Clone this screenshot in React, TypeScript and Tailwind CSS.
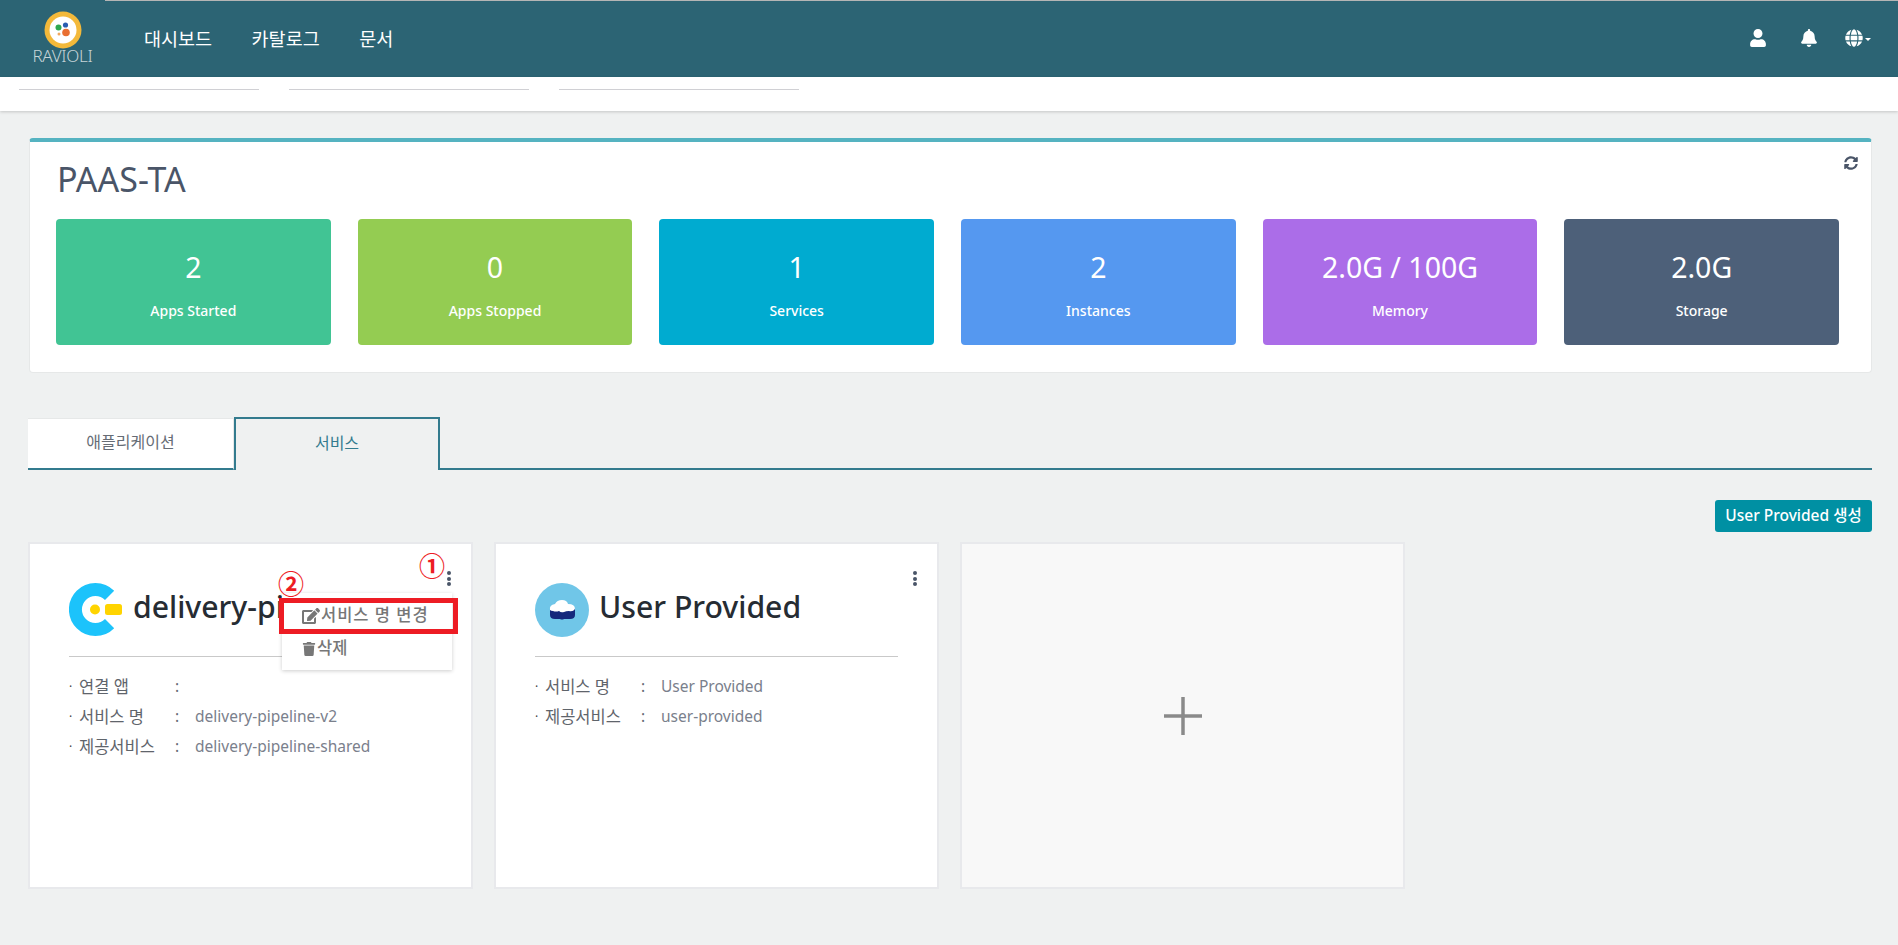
import { FaBell, FaEdit, FaGlobe, FaSyncAlt, FaTrash, FaUser } from "react-icons/fa";

const font = '"Noto Sans", "Noto Sans CJK KR", sans-serif';

const stats = [
  { value: "2", label: "Apps Started", color: "bg-[#41c494]" },
  { value: "0", label: "Apps Stopped", color: "bg-[#94cc52]" },
  { value: "1", label: "Services", color: "bg-[#00abd0]" },
  { value: "2", label: "Instances", color: "bg-[#5598f0]" },
  { value: "2.0G / 100G", label: "Memory", color: "bg-[#ab6de8]" },
  { value: "2.0G", label: "Storage", color: "bg-[#4d6079]" },
];

const Logo = () => (
  <div className="flex h-[77px] w-[105px] shrink-0 flex-col items-center pt-[11px] pl-[20px]">
    <svg width="38" height="38" viewBox="0 0 38 38">
      <circle cx="19" cy="19" r="18.5" fill="#f3b93a" />
      <circle cx="19" cy="19" r="13.5" fill="#ffffff" />
      <circle cx="14.5" cy="16.5" r="3" fill="#2fa84f" />
      <circle cx="21.5" cy="14" r="2.6" fill="#2a5db0" />
      <circle cx="22" cy="21.5" r="3.8" fill="#e96f32" />
      <circle cx="15" cy="23" r="1.5" fill="#f0a860" />
    </svg>
    <span className="mt-[-2px] text-[17px] leading-[18px] font-light tracking-[-0.3px] text-[#c6d4d8]">RAVIOLI</span>
  </div>
);

const DeliveryIcon = () => (
  <svg width="54" height="54" viewBox="0 0 54 54" className="shrink-0">
    <path d="M40.6 12.4A20 20 0 1 0 40.6 40.6" fill="none" stroke="#1cc3fb" strokeWidth="13" />
    <circle cx="26" cy="26.5" r="5" fill="#ffd400" />
    <rect x="36" y="21" width="17" height="11" rx="2.5" fill="#ffd400" />
  </svg>
);

const CloudIcon = () => (
  <svg width="54" height="54" viewBox="0 0 54 54" className="shrink-0">
    <circle cx="27" cy="27" r="27" fill="#70c6e8" />
    <path d="M15 25v7q0 4 5 4h5q2 1 4 0h6q5 0 5-4v-7z" fill="#15297c" />
    <path d="M15 27q-1-5 5-6 2-4 7-4 5 0 6 4 7 0 7 5-2 3-6 2-3 0-5 1-3 1-5-1-3 1-6 0-2 0-3-1z" fill="#ffffff" />
  </svg>
);

const Dots = () => (
  <div className="absolute top-[27px] right-[20px] flex flex-col gap-[1.5px]">
    <span className="h-[4px] w-[4px] rounded-full bg-[#4a5568]" />
    <span className="h-[4px] w-[4px] rounded-full bg-[#4a5568]" />
    <span className="h-[4px] w-[4px] rounded-full bg-[#4a5568]" />
  </div>
);

const InfoRow = ({ label, value }: { label: string; value?: string }) => (
  <div className="flex h-[30px] items-center text-[15.5px] text-[#666c75]">
    <span className="w-[10px] text-[12px] text-[#444]">·</span>
    <span className="w-[96px] text-[16.5px] text-[#5f646b]">{label}</span>
    <span className="w-[20px]">:</span>
    <span className="text-[#7a808c]">{value}</span>
  </div>
);

const ServiceCard = ({
  icon,
  title,
  rows,
}: {
  icon: React.ReactNode;
  title: string;
  rows: { label: string; value?: string }[];
}) => (
  <div className="relative h-[347px] border-2 border-[#e8e9ec] bg-white px-[39px] pt-[39px]">
    <Dots />
    <div className="flex h-[74px] items-start gap-[10px] border-b border-[#c9c9c9] whitespace-nowrap">
      {icon}
      <span className="text-[30.2px] leading-[48px] font-medium text-[#262c33]">{title}</span>
    </div>
    <div className="mt-[15px]">
      {rows.map((r) => (
        <InfoRow key={r.label} label={r.label} value={r.value} />
      ))}
    </div>
  </div>
);

export default function App() {
  return (
    <div className="min-h-screen bg-[#eff1f1]" style={{ fontFamily: font }}>
      <header className="flex h-[77px] bg-[#2c6474] text-white">
        <Logo />
        <div className="flex flex-1 items-center border-t border-[#b5b5b5] pr-[27px] pl-[39px]">
          <nav className="flex gap-[39.5px] text-[18.5px]">
            <span>대시보드</span>
            <span>카탈로그</span>
            <span>문서</span>
          </nav>
          <div className="ml-auto mt-[-2px] flex items-center">
            <FaUser size={18} />
            <FaBell size={18} className="ml-[33px]" />
            <FaGlobe size={18} className="ml-[27px]" />
            <span className="mt-[2px] ml-[2px] h-0 w-0 border-x-[3px] border-t-[3px] border-x-transparent border-t-white" />
          </div>
        </div>
      </header>

      <div className="h-[34px] bg-white pt-[12px] shadow-[0_1px_3px_rgba(0,0,0,0.18)]">
        <div className="flex gap-[30px] pl-[19px]">
          <div className="h-[1px] w-[240px] bg-[#d0d0d4]" />
          <div className="h-[1px] w-[240px] bg-[#d0d0d4]" />
          <div className="h-[1px] w-[240px] bg-[#d0d0d4]" />
        </div>
      </div>

      <main className="pr-[26px] pl-[28px]">
        <section className="relative mt-[27px] ml-[1px] h-[235px] rounded-[4px] border border-[#e6e8e8] border-t-[4px] border-t-[#55b3c1] bg-white pr-[32px] pl-[26px]">
          <FaSyncAlt size={14} className="absolute top-[14px] right-[13px] text-[#4a5568]" />
          <h1 className="ml-[1px] pt-[14px] text-[34px] leading-[46px] text-[#4a5568]">PAAS-TA</h1>
          <div className="mt-[17px] grid grid-cols-6 gap-x-[27px]">
            {stats.map((s) => (
              <div
                key={s.label}
                className={`flex h-[126px] flex-col items-center rounded-[4px] pt-[30px] text-white ${s.color}`}
              >
                <span className="text-[28.5px] leading-[36px]">{s.value}</span>
                <span className="mt-[16px] text-[14px] leading-[20px] font-medium">{s.label}</span>
              </div>
            ))}
          </div>
        </section>

        <div className="mt-[44px] flex h-[53px] items-end">
          <div className="flex h-[52px] w-[206px] items-center justify-center border-t border-r border-b-2 border-[#e6e8e8] border-b-[#337b8e] bg-white pb-[3px] text-[16px] text-[#666c75]">
            애플리케이션
          </div>
          <div className="flex h-[53px] w-[206px] items-center justify-center border-2 border-b-0 border-[#337b8e] pb-[3px] text-[16px] text-[#337b8e]">
            서비스
          </div>
          <div className="flex-1 border-b-2 border-[#337b8e]" />
        </div>

        <div className="mt-[30px] flex justify-end">
          <button className="h-[32px] w-[157px] rounded-[3px] bg-[#0090a3] text-[15.5px] font-medium text-white">
            User Provided 생성
          </button>
        </div>

        <div className="relative mt-[10px] grid w-[1377px] grid-cols-3 gap-x-[21px]">
          <ServiceCard
            icon={<DeliveryIcon />}
            title="delivery-pipeline-v2"
            rows={[
              { label: "연결 앱" },
              { label: "서비스 명", value: "delivery-pipeline-v2" },
              { label: "제공서비스", value: "delivery-pipeline-shared" },
            ]}
          />
          <ServiceCard
            icon={<CloudIcon />}
            title="User Provided"
            rows={[
              { label: "서비스 명", value: "User Provided" },
              { label: "제공서비스", value: "user-provided" },
            ]}
          />
          <div className="flex h-[347px] items-center justify-center border-2 border-[#e8e9ec] bg-[#f8f8f8]">
            <svg width="42" height="42" viewBox="0 0 42 42">
              <path d="M21 2v38M2 21h38" stroke="#8a8a8a" strokeWidth="3.5" />
            </svg>
          </div>

          <div className="absolute top-[51px] left-[254px] z-10 w-[170px] bg-white pt-[6px] pb-[5px] text-[16.5px] font-medium text-[#777] shadow-[0_1px_4px_rgba(0,0,0,0.2)]">
            <div className="flex h-[33px] items-center gap-[1px] pl-[20px] tracking-[1px]">
              <FaEdit size={18} />
              <span>서비스 명 변경</span>
            </div>
            <div className="flex h-[33px] items-center gap-[1px] pl-[20px]">
              <FaTrash size={14} />
              <span>삭제</span>
            </div>
          </div>
          <div className="absolute top-[56px] left-[251px] z-20 h-[36px] w-[179px] border-[5px] border-[#ed1c24]" />
          <span className="absolute top-[6px] left-[391px] z-20 text-[26px] leading-[36px] font-bold text-[#ed1c24]">①</span>
          <span className="absolute top-[24px] left-[250px] z-20 text-[26px] leading-[36px] font-bold text-[#ed1c24]">②</span>
        </div>
      </main>
    </div>
  );
}
